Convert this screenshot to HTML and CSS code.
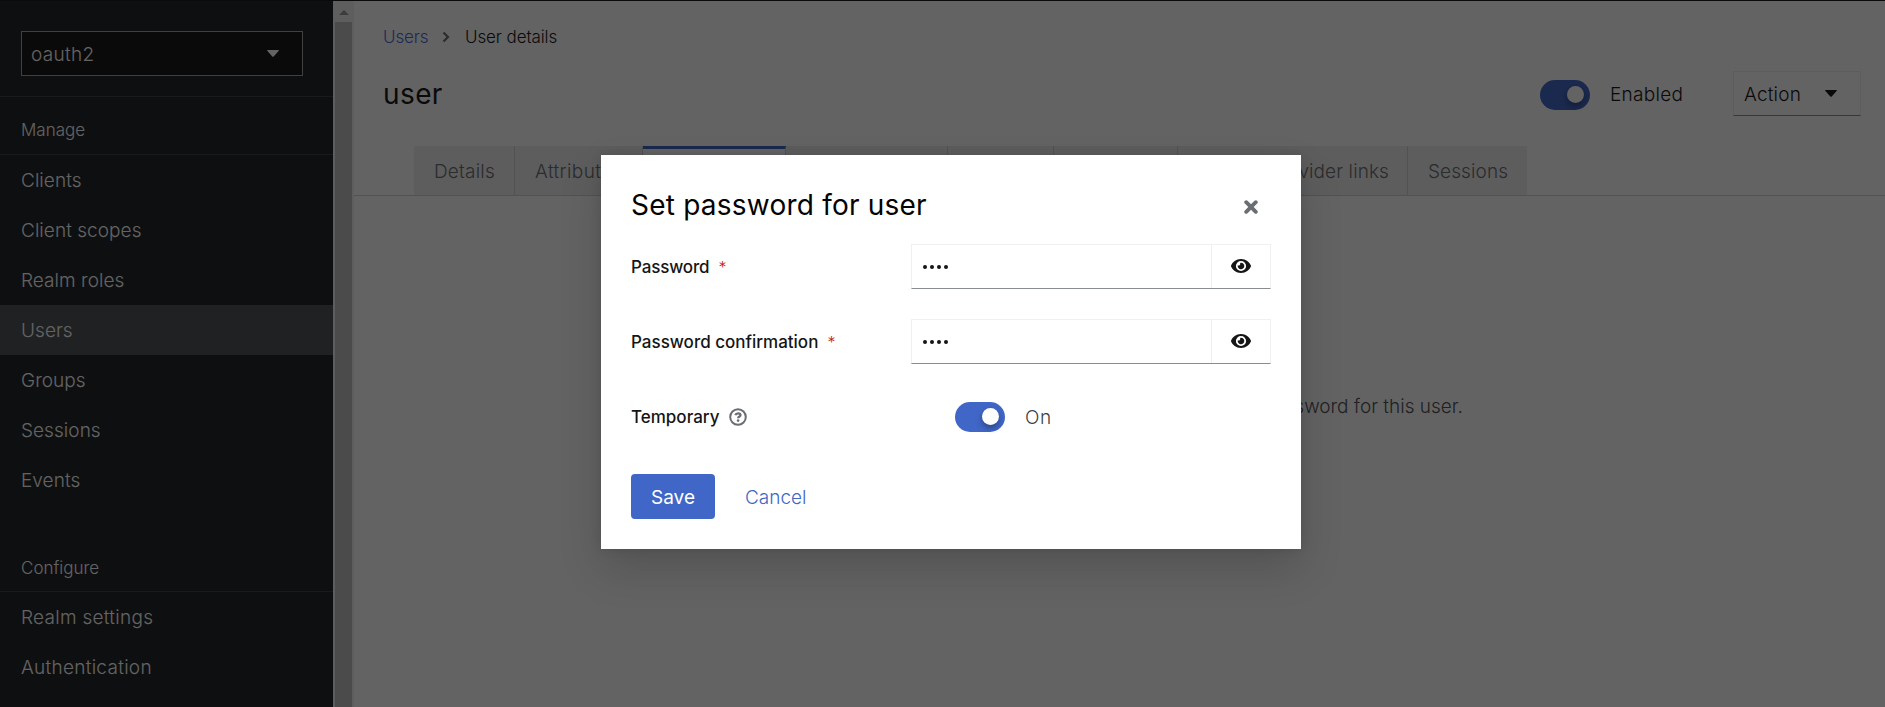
FILE: index.html
```html
<!DOCTYPE html>
<html lang="en">
<head>
<meta charset="utf-8">
<title>User details</title>
<link rel="stylesheet" href="styles.css">
</head>
<body>
<div class="page">
  <nav class="sidebar">
    <div class="realm">
      <div class="realm-select"><span class="t-realm">oauth2</span><svg class="caret" viewBox="0 0 12 7"><path d="M.8 0h10.4q1.2.2.4 1.100L6.700 6.500q-.7.700-1.400 0L.4 1.100Q-.4.200.8 0z"/></svg></div>
    </div>
    <h2 class="nav-title">Manage</h2>
    <a class="nav-item">Clients</a>
    <a class="nav-item">Client scopes</a>
    <a class="nav-item">Realm roles</a>
    <a class="nav-item current">Users</a>
    <a class="nav-item">Groups</a>
    <a class="nav-item">Sessions</a>
    <a class="nav-item">Events</a>
    <h2 class="nav-title second">Configure</h2>
    <a class="nav-item wide">Realm settings</a>
    <a class="nav-item wide">Authentication</a>
  </nav>
  <div class="scrollbar"><div class="scroll-up"><svg viewBox="0 0 10 5"><path d="M5 0l5 5H0z"/></svg></div><div class="thumb"></div></div>
  <main class="main">
    <div class="crumbs"><a class="crumb-link">Users</a><svg class="chevron" viewBox="0 0 8 12"><path d="M1.500 1.500L6 6l-4.500 4.500"/></svg><span class="crumb-now">User details</span></div>
    <header class="head">
      <h1 class="title">user</h1>
      <span class="switch"><i></i></span>
      <span class="enabled">Enabled</span>
      <div class="action"><span>Action</span><svg class="caret" viewBox="0 0 12 7"><path d="M.8 0h10.4q1.2.2.4 1.100L6.700 6.500q-.7.700-1.400 0L.4 1.100Q-.4.200.8 0z"/></svg></div>
    </header>
    <div class="tabs">
      <div class="tab w-details">Details</div>
      <div class="tab w-attributes">Attributes</div>
      <div class="tab active w-credentials">Credentials</div>
      <div class="tab w-role">Role mapping</div>
      <div class="tab w-groups">Groups</div>
      <div class="tab w-consents">Consents</div>
      <div class="tab w-links">Identity provider links</div>
      <div class="tab w-sessions">Sessions</div>
    </div>
    <p class="empty">This user does not have any credentials. You can set password for this user.</p>
  </main>
</div>
<div class="backdrop">
  <section class="modal">
    <div class="modal-head">
      <h1 class="modal-title">Set password for user</h1>
      <svg class="close" viewBox="0 0 14 14"><path d="M2.200 2.200l9.600 9.600M11.800 2.200l-9.600 9.600"/></svg>
    </div>
    <div class="row">
      <div class="label"><span class="t-password">Password</span><span class="star">*</span></div>
      <div class="field"><div class="input"><b></b><b></b><b></b><b></b></div><div class="reveal"><svg class="eye" viewBox="0 0 20 14"><path fill-rule="evenodd" d="M10 0C15 0 18.400 3 19.900 6.400q.2.600 0 1.200C18.400 11 15 14 10 14S1.600 11 .1 7.600q-.2-.6 0-1.200C1.600 3 5 0 10 0zm0 1.900a5.100 5.100 0 1 0 0 10.200a5.100 5.100 0 1 0 0-10.200z"/><path d="M10 3.700a3.300 3.300 0 1 1-3.200 2.500a1.700 1.700 0 0 0 2.300-2.300q.4-.2.900-.2z"/></svg></div></div>
    </div>
    <div class="row">
      <div class="label"><span class="t-confirm">Password confirmation</span><span class="star">*</span></div>
      <div class="field"><div class="input"><b></b><b></b><b></b><b></b></div><div class="reveal"><svg class="eye" viewBox="0 0 20 14"><path fill-rule="evenodd" d="M10 0C15 0 18.400 3 19.900 6.400q.2.600 0 1.200C18.400 11 15 14 10 14S1.600 11 .1 7.600q-.2-.6 0-1.200C1.600 3 5 0 10 0zm0 1.900a5.100 5.100 0 1 0 0 10.200a5.100 5.100 0 1 0 0-10.200z"/><path d="M10 3.700a3.300 3.300 0 1 1-3.200 2.500a1.700 1.700 0 0 0 2.300-2.300q.4-.2.900-.2z"/></svg></div></div>
    </div>
    <div class="row">
      <div class="label"><span class="t-temporary">Temporary</span><svg class="help" viewBox="0 0 18 18"><circle cx="9" cy="9" r="7.800"/><path class="hook" d="M6.300 7.200Q7 5.300 9.100 5.300q2.400 0 2.400 1.800q0 .9-1.200 1.500Q9.100 9.200 9.100 10.300"/><circle class="dot" cx="9.100" cy="12.600" r="1.300"/></svg></div>
      <div class="temp"><span class="switch"><i></i></span><span class="on">On</span></div>
    </div>
    <div class="buttons"><div class="save"><span>Save</span></div><div class="cancel">Cancel</div></div>
  </section>
</div>
</body>
</html>
```
FILE: styles.css
```css
* { box-sizing: border-box; }
body { margin: 0; width: 1885px; height: 707px; overflow: hidden; position: relative; font-family: Inter, "Open Sans", sans-serif; font-size: 19px; font-weight: 300; color: #151515; }
h1, h2, p { margin: 0; font-weight: 400; }
span, a, h1, h2, p, .tab, .cancel { white-space: nowrap; }
svg { display: block; flex: none; }
.page { display: flex; height: 707px; border-top: 1px solid #151515; background: #fff; }
.sidebar { width: 333px; background: #212427; color: #fff; flex: none; overflow: hidden; }
.realm { height: 96px; padding: 30px 30px 0 21px; border-bottom: 1px solid #3c3f42; }
.realm-select { height: 45px; border: 1px solid #a0a2a5; background: #151515; display: flex; align-items: center; justify-content: space-between; padding: 0 23px 0 9px; }
.t-realm { letter-spacing: .3px; padding-top: 1px; }
.caret { width: 12px; height: 7px; fill: currentColor; }
.nav-title { height: 58px; padding-left: 21px; font-size: 17px; font-weight: 300; line-height: 66px; border-bottom: 1px solid #3c3f42; }
.nav-title.second { margin-top: 29px; line-height: 68px; }
.nav-item { display: block; height: 50px; line-height: 52px; padding-left: 21px; letter-spacing: .05px; }
.nav-item.wide { letter-spacing: .28px; }
.current { background: #4f5255; }
.scrollbar { width: 21px; background: #f1f1f1; flex: none; padding: 0 2px; display: flex; flex-direction: column; }
.scroll-up { height: 21px; display: flex; justify-content: center; padding-top: 9px; }
.scroll-up svg { width: 10px; height: 5px; fill: #999; }
.thumb { flex: 1; background: #c1c1c1; }
.main { flex: 1; min-width: 0; }
.crumbs { height: 70px; padding: 1px 0 0 29px; display: flex; align-items: center; font-size: 17px; letter-spacing: -.1px; }
.crumb-link { color: #4a6bdd; width: 59px; }
.chevron { width: 8px; height: 12px; fill: none; stroke: #6a6e73; stroke-width: 2.200; }
.crumb-now { margin-left: 15px; }
.head { height: 45px; margin: 0 24px 0 29px; display: flex; align-items: center; }
.title { font-size: 28px; flex: 1; letter-spacing: .4px; }
.switch { width: 50px; height: 30px; border-radius: 15px; background: #4067c7; display: flex; padding: 6px 6px 0 27px; flex: none; }
.switch i { width: 17px; height: 17px; border-radius: 50%; background: #fff; box-shadow: 0 3px 6px rgba(3,3,3,.35); }
.enabled { width: 143px; padding: 2px 0 0 20px; letter-spacing: .3px; }
.head .switch { position: relative; top: 1px; }
.action { width: 128px; height: 45px; border: 1px solid #f0f0f0; border-bottom-color: #8a8d90; display: flex; align-items: center; justify-content: space-between; padding: 0 23px 0 10px; letter-spacing: .2px; }
.action span { padding-top: 1px; }
.tabs { display: flex; height: 50px; margin-top: 30px; padding-left: 60px; border-bottom: 1px solid #d2d2d2; color: #6a6e73; letter-spacing: .1px; }
.tab { background: #f0f0f0; border-right: 1px solid #d2d2d2; padding-left: 20px; line-height: 51px; height: 49px; overflow: hidden; }
.tab.active { background: #fff; border-top: 3px solid #4067c7; color: #151515; line-height: 45px; height: 50px; }
.w-details { width: 101px; letter-spacing: .2px; }
.w-attributes { width: 128px; letter-spacing: .4px; }
.w-credentials { width: 143px; }
.w-role { width: 162px; }
.w-groups { width: 106px; }
.w-consents { width: 124px; }
.w-links { width: 230px; display: flex; justify-content: flex-end; padding: 0 18px 0 0; }
.w-sessions { width: 119px; border-right: 0; }
.empty { text-align: center; margin-top: 196px; padding-left: 16px; line-height: 30px; color: #4f5255; font-weight: 300; }
.backdrop { position: absolute; inset: 0; background: rgba(3,3,3,.62); display: flex; justify-content: center; align-items: flex-start; padding: 155px 0 0 17px; }
.modal { width: 700px; height: 394px; background: #fff; padding: 30px; box-shadow: 0 20px 40px rgba(3,3,3,.16), 0 0 10px rgba(3,3,3,.1); }
.modal-head { height: 59px; display: flex; justify-content: space-between; padding-right: 13px; }
.modal-title { font-size: 28px; line-height: 40px; color: #030303; letter-spacing: .22px; }
.close { width: 14px; height: 14px; margin-top: 15px; fill: none; stroke: #6a6e73; stroke-width: 3.800; stroke-linecap: round; }
.row { height: 45px; margin-bottom: 30px; display: flex; }
.label { width: 280px; display: flex; align-items: center; font-size: 17px; font-weight: 500; padding-top: 1px; }
.t-password { letter-spacing: -.15px; }
.star { color: #c9190b; margin-left: 9px; font-size: 16px; font-weight: 300; }
.field { flex: 1; display: flex; border: 1px solid #f0f0f0; border-bottom-color: #8a8d90; }
.input { flex: 1; display: flex; align-items: center; gap: 3px; padding: 1px 0 0 11px; }
.input b { width: 4px; height: 4px; border-radius: 50%; background: #151515; }
.reveal { width: 59px; border-left: 1px solid #f0f0f0; display: flex; align-items: center; justify-content: center; padding-bottom: 1px; }
.eye { width: 20px; height: 14px; fill: #151515; }
.help { width: 18px; height: 18px; margin-left: 10px; fill: none; stroke: #6a6e73; stroke-width: 2; }
.help .hook { stroke-width: 2.300; }
.help .dot { fill: #6a6e73; stroke: none; }
.temp { padding-left: 44px; display: flex; align-items: center; }
.on { margin-left: 20px; padding-top: 1px; color: #3c3f42; letter-spacing: .5px; }
.buttons { display: flex; gap: 30px; line-height: 47px; margin-top: 35px; }
.save { width: 84px; height: 45px; border-radius: 4px; background: #4067c7; color: #fff; text-align: center; font-weight: 400; }
.cancel { color: #4067c7; }
```
